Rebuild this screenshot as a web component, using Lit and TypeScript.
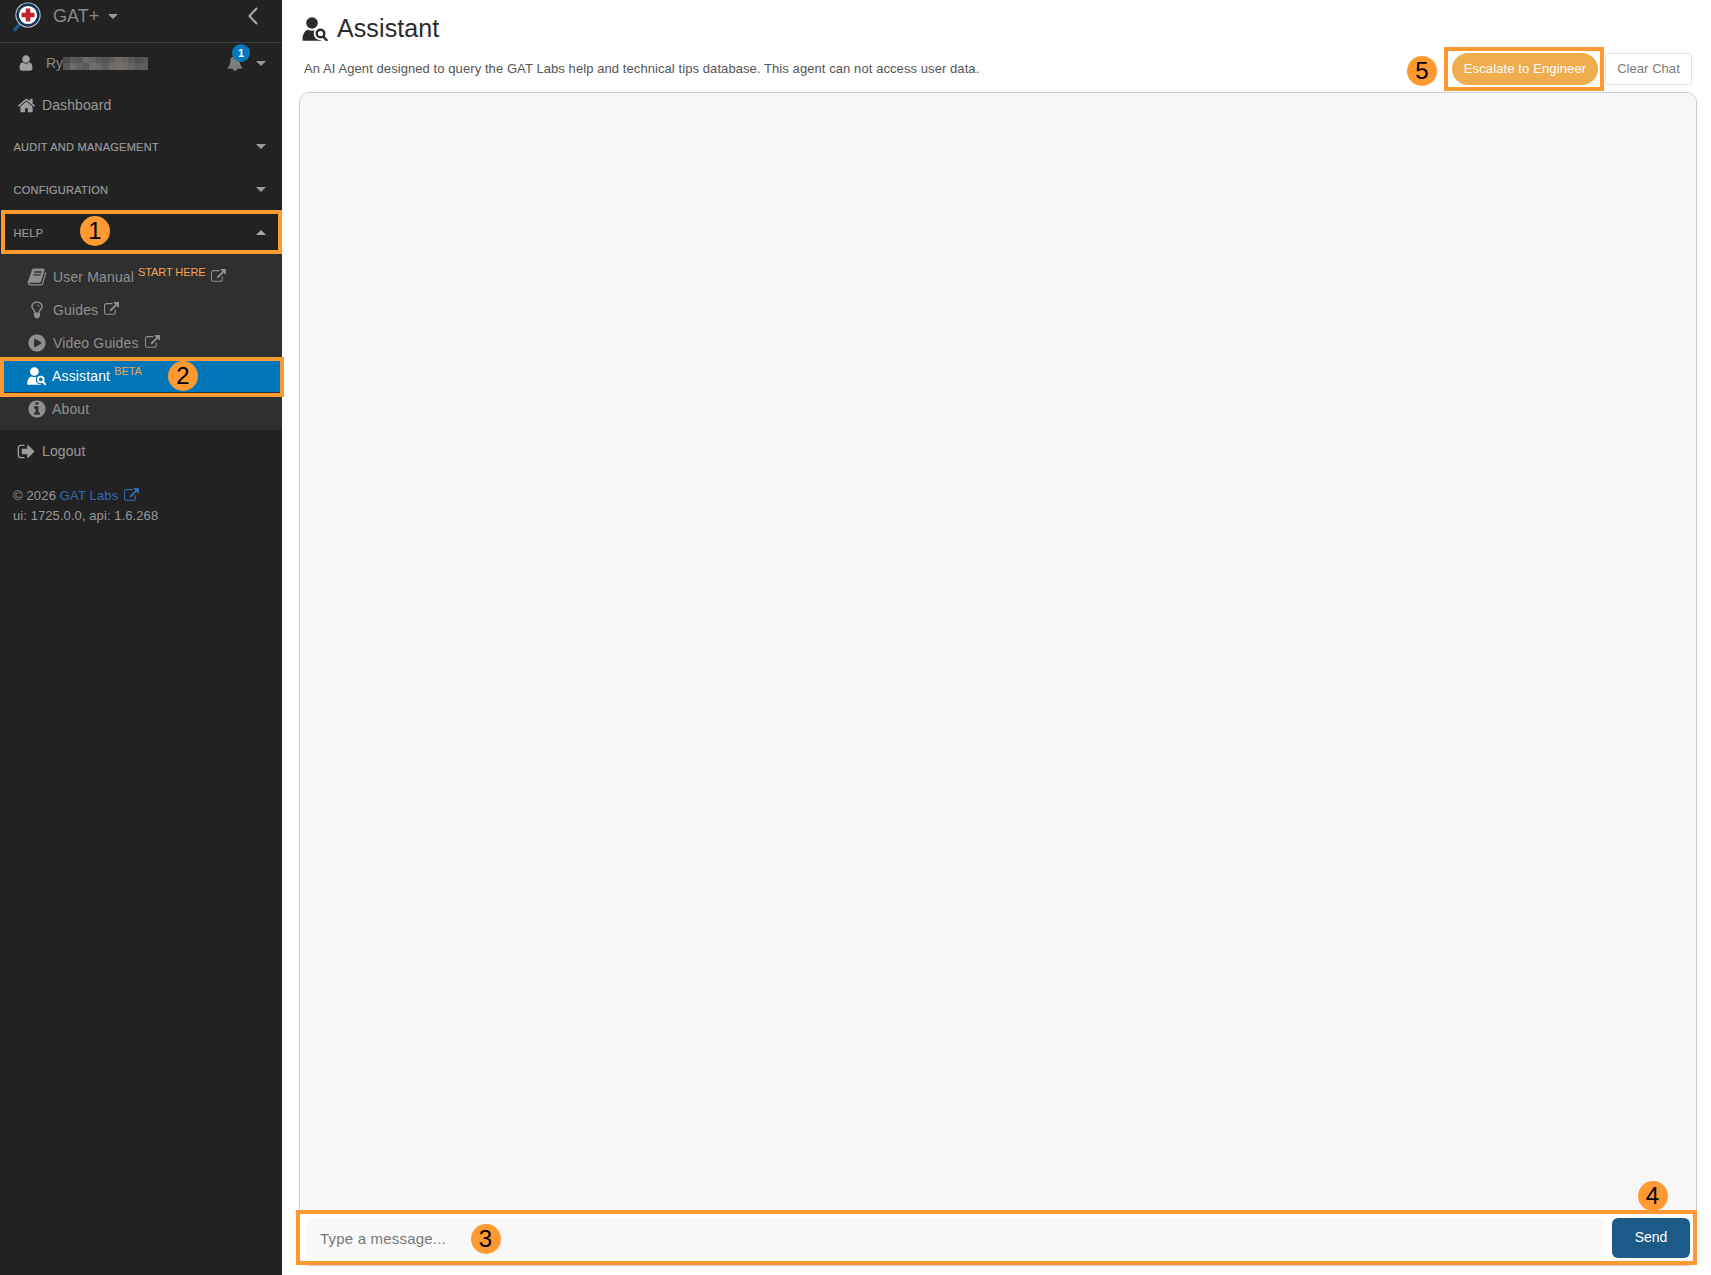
import { LitElement, css, html, svg } from 'lit';
import { customElement } from 'lit/decorators.js';

const FA = {
  user: 'M1536 1399q0 109-62.5 187t-150.5 78h-854q-88 0-150.5-78t-62.5-187q0-85 8.5-160.5t31.5-152 58.5-131 94-89 134.5-34.5q131 128 313 128t313-128q76 0 134.5 34.5t94 89 58.5 131 31.5 152 8.5 160.5zm-256-887q0 159-112.5 271.5t-271.5 112.5-271.5-112.5-112.5-271.5 112.5-271.5 271.5-112.5 271.5 112.5 112.5 271.5z',
  bell: 'M912 1696q0-16-16-16-59 0-101.5-42.5t-42.5-101.5q0-16-16-16t-16 16q0 73 51.5 124.5t124.5 51.5q16 0 16-16zm816-288q0 52-38 90t-90 38h-448q0 106-75 181t-181 75-181-75-75-181h-448q-52 0-90-38t-38-90q50-42 91-88t85-119.5 74.5-158.5 50-206 19.5-260q0-152 117-282.5t307-158.5q-8-19-8-39 0-40 28-68t68-28 68 28 28 68q0 20-8 39 190 28 307 158.5t117 282.5q0 139 19.5 260t50 206 74.5 158.5 85 119.5 91 88z',
  home: 'M1472 992v480q0 26-19 45t-45 19h-384v-384h-256v384h-384q-26 0-45-19t-19-45v-480q0-1 .5-3t.5-3l575-474 575 474q1 2 1 6zm223-69l-62 74q-8 9-21 11h-3q-13 0-21-7l-692-577-692 577q-12 8-24 7-13-2-21-11l-62-74q-8-10-7-23.5t11-21.5l719-599q32-26 76-26t76 26l244 204v-195q0-14 9-23t23-9h192q14 0 23 9t9 23v408l219 182q10 8 11 21.5t-7 23.5z',
  ext: 'M1408 928v320q0 119-84.5 203.5t-203.5 84.5h-832q-119 0-203.5-84.5t-84.5-203.5v-832q0-119 84.5-203.5t203.5-84.5h704q14 0 23 9t9 23v64q0 14-9 23t-23 9h-704q-66 0-113 47t-47 113v832q0 66 47 113t113 47h832q66 0 113-47t47-113v-320q0-14 9-23t23-9h64q14 0 23 9t9 23zm384-864v512q0 26-19 45t-45 19-45-19l-176-176-652 652q-10 10-23 10t-23-10l-114-114q-10-10-10-23t10-23l652-652-176-176q-19-19-19-45t19-45 45-19h512q26 0 45 19t19 45z',
  info: 'M1152 1376v-160q0-14-9-23t-23-9h-96v-512q0-14-9-23t-23-9h-320q-14 0-23 9t-9 23v160q0 14 9 23t23 9h96v320h-96q-14 0-23 9t-9 23v160q0 14 9 23t23 9h448q14 0 23-9t9-23zm-128-896v-160q0-14-9-23t-23-9h-192q-14 0-23 9t-9 23v160q0 14 9 23t23 9h192q14 0 23-9t9-23zm640 416q0 209-103 385.5t-279.5 279.5-385.5 103-385.5-103-279.5-279.5-103-385.5 103-385.5 279.5-279.5 385.5-103 385.5 103 279.5 279.5 103 385.5z',
  play: 'M896 128q209 0 385.5 103t279.5 279.5 103 385.5-103 385.5-279.5 279.5-385.5 103-385.5-103-279.5-279.5-103-385.5 103-385.5 279.5-279.5 385.5-103zm384 823q32-18 32-55t-32-55l-544-320q-31-19-64-1-32 19-32 56v640q0 37 32 56 16 8 32 8 17 0 32-9z',
  signout: 'M704 1440q0 4 1 20t.5 26.5-3 23.5-10 19.5-20.5 6.5h-320q-119 0-203.5-84.5t-84.5-203.5v-704q0-119 84.5-203.5t203.5-84.5h320q13 0 22.5 9.5t9.5 22.5q0 4 1 20t.5 26.5-3 23.5-10 19.5-20.5 6.5h-320q-66 0-113 47t-47 113v704q0 66 47 113t113 47h312l11.5 1 11.5 3 8 5.5 7 9 2 13.5zm928-544q0 26-19 45l-544 544q-19 19-45 19t-45-19-19-45v-288h-448q-26 0-45-19t-19-45v-384q0-26 19-45t45-19h448v-288q0-26 19-45t45-19 45 19l544 544q19 19 19 45z',
  book: 'M1703 478q40 57 18 129l-275 906q-19 64-76.5 107.5t-122.5 43.5h-923q-77 0-148.5-53.5t-99.5-131.5q-24-67-2-127 0-4 3-27t4-37q1-8-3-21.5t-3-19.5q2-11 8-21t16.5-23.5 16.5-23.5q23-38 45-91.5t30-91.5q3-10 .5-30t-.5-28q3-11 17-28t17-23q21-36 42-92t25-90q1-9-2.5-32t.5-28q4-13 22-30.5t22-22.5q19-26 42.5-84.5t27.5-96.5q1-8-3-25.5t-2-26.5q2-8 9-18t18-23 17-21q8-12 16.5-30.5t15-35 16-36 19.5-32 26.5-23.5 36-11.5 47.5 5.5l-1 3q38-9 51-9h761q74 0 114 56t18 130l-274 906q-36 119-71.5 153.5t-128.5 34.5h-869q-27 0-38 15-11 16-1 43 24 70 144 70h923q29 0 56-15.5t35-41.5l300-987q7-22 5-57 38 15 59 43zm-1064 2q-4 13 2 22.5t20 9.5h608q13 0 25.5-9.5t16.5-22.5l21-64q4-13-2-22.5t-20-9.5h-608q-13 0-25.5 9.5t-16.5 22.5zm-83 256q-4 13 2 22.5t20 9.5h608q13 0 25.5-9.5t16.5-22.5l21-64q4-13-2-22.5t-20-9.5h-608q-13 0-25.5 9.5t-16.5 22.5z',
  bulb: 'M1120 576q0 13-9.5 22.5t-22.5 9.5-22.5-9.5-9.5-22.5q0-46-54-71t-106-25q-13 0-22.5-9.5t-9.5-22.5 9.5-22.5 22.5-9.5q50 0 99.5 16t87 54 37.5 90zm160 0q0-72-34.5-134t-90-101.5-123-62-136.5-22.5-136.5 22.5-123 62-90 101.5-34.5 134q0 101 68 180 10 11 30.5 33t30.5 33q128 153 141 298h228q13-145 141-298 10-11 30.5-33t30.5-33q68-79 68-180zm128 0q0 155-103 268-45 49-74.5 87t-59.5 95.5-34 107.5q47 28 47 82 0 37-25 64 25 27 25 64 0 52-45 81 13 23 13 47 0 46-31.5 71t-77.5 25q-20 44-60 70t-87 26-87-26-60-70q-46 0-77.5-25t-31.5-71q0-24 13-47-45-29-45-81 0-37 25-64-25-27-25-64 0-54 47-82-4-50-34-107.5t-59.5-95.5-74.5-87q-103-113-103-268 0-99 44.5-184.5t117-142 164-89 186.5-32.5 186.5 32.5 164 89 117 142 44.5 184.5z',
};

const fa = (d: string, cls: string) => html`<svg class=${cls} viewBox="0 0 1792 1792" fill="currentColor"><path d=${d}></path></svg>`;

// person with a magnifier over the shoulder, --cut is the colour behind it
const agentIcon = (cls: string) => html`<svg class=${cls} viewBox="0 0 26 24" fill="currentColor">
  <circle cx="9.5" cy="6" r="5.8"></circle>
  <path d="M1 23.8c-.7 0-1-.4-1-1.200 0-5.400 2.500-9.600 6-9.800 1 .7 2.200 1 3.500 1s2.500-.3 3.500-1c3.500.2 6 4 6 9.800 0 .8-.3 1.200-1 1.200z"></path>
  <circle cx="18" cy="16.500" r="6.800" fill="var(--cut)"></circle>
  <circle cx="18" cy="16.500" r="3.800" fill="none" stroke="currentColor" stroke-width="2.400"></circle>
  <path d="M21 19.800l3 3.200" stroke="currentColor" stroke-width="2.500" stroke-linecap="round"></path>
</svg>`;

const logo = svg`
  <path d="M7.500 23.500L2 29.500" stroke="#1c5588" stroke-width="3.800" stroke-linecap="round"></path>
  <circle cx="15" cy="15" r="12.600" fill="#d9dee3"></circle>
  <circle cx="15" cy="15" r="10.400" fill="#fff" stroke="#17365a" stroke-width="2.600"></circle>
  <path d="M12.700 8.500h4.600v4.200h4.200v4.600h-4.200v4.200h-4.600v-4.200h-4.200v-4.600h4.200z" fill="#c8202c"></path>
`;

const blur = [
  ['#4a4a4a', '#5c5c5c', '#565656', '#6a6a6a', '#626262', '#5a5a5a', '#555', '#5f5f5f', '#6f6a66', '#676462', '#5a5a5a', '#4f4f4f', '#555'],
  ['#575757', '#6b6b6b', '#616161', '#595959', '#6e6e6e', '#686868', '#5d5d5d', '#6b6b6b', '#75706a', '#706c68', '#666', '#5b5b5b', '#5e5e5e'],
];

const subItems = [
  { icon: FA.book, label: 'User Manual', sup: 'START HERE', ext: true },
  { icon: FA.bulb, label: 'Guides', ext: true },
  { icon: FA.play, label: 'Video Guides', ext: true },
];

@customElement('app-root')
export class AppRoot extends LitElement {
  static styles = css`
    :host {
      display: flex;
      position: relative;
      width: 1711px;
      height: 1275px;
      overflow: hidden;
      background: #fff;
      font-family: 'Liberation Sans', Arial, sans-serif;
      color: #333;
    }

    .sidebar {
      width: 282px;
      flex: none;
      background: #222;
      color: #999;
      font-size: 14px;
      display: flex;
      flex-direction: column;
    }

    .brand {
      flex: none;
      display: flex;
      align-items: center;
      border-bottom: 1px solid #3c3c3c;
      padding: 0 24px 10px 13px;
      height: 32px;
    }
    .logo { width: 30px; height: 32px; flex: none; }
    .brand-name { font-size: 18px; color: #8a8a8a; margin-left: 10px; }
    .brand .caret { margin-left: 9px; }
    .chev { width: 10px; height: 18px; margin-left: auto; }

    .caret {
      width: 0;
      height: 0;
      flex: none;
      border-left: 5px solid transparent;
      border-right: 5px solid transparent;
      border-top: 5px solid #9a9a9a;
    }
    .caret.up { border-top: 0; border-bottom: 5px solid #a8a8a8; }

    .user {
      height: 40px;
      flex: none;
      display: flex;
      align-items: center;
      padding: 0 16px 0 17px;
    }
    .user .ic { width: 18px; height: 18px; color: #a0a0a0; }
    .user-name { margin-left: 11px; color: #888; }
    .pixels { display: flex; flex-direction: column; }
    .pixels div { display: flex; }
    .pixels span { width: 6.500px; height: 6.500px; }
    .bell-wrap { position: relative; margin-left: auto; margin-right: 13px; height: 16px; }
    .bell { width: 16px; height: 16px; color: #7d7d7d; display: block; }
    .badge {
      position: absolute;
      left: 5px;
      top: -11px;
      width: 18px;
      height: 18px;
      border-radius: 50%;
      background: #0678bd;
      color: #fff;
      font-size: 11px;
      font-weight: 700;
      display: flex;
      align-items: center;
      justify-content: center;
    }

    .link {
      height: 42px;
      flex: none;
      display: flex;
      align-items: center;
      padding-left: 17px;
      color: #999;
      letter-spacing: 0.1px;
    }
    .link.dash { padding-top: 2px; box-sizing: border-box; }
    .link .ic { width: 19px; height: 19px; margin-right: 6px; color: #9c9c9c; flex: none; }

    .section {
      height: 43px;
      flex: none;
      display: flex;
      align-items: center;
      justify-content: space-between;
      padding: 0 16px 0 13.500px;
      font-size: 11px;
      color: #9a9a9a;
      letter-spacing: 0.25px;
      -webkit-text-stroke: 0.2px #9a9a9a;
    }

    .sub {
      background: #2f2f2f;
      padding: 6px 0 5px;
      flex: none;
    }
    .sub-row {
      height: 33px;
      display: flex;
      align-items: center;
      padding-left: 27px;
      color: #8f8f8f;
      letter-spacing: 0.15px;
    }
    .sub-row .ic { width: 20px; height: 20px; margin-right: 6px; color: #8f8f8f; flex: none; }
    .sub-row .agent { --cut: #0075b8; width: 20px; height: 18px; margin: 0 5px 0 0; color: #fff; }
    .sub-row.active { background: #0075b8; color: #fff; }
    .sub-row.about .ic { margin-right: 5px; }
    sup {
      font-size: 11px;
      line-height: 1;
      color: #f5a64e;
      align-self: flex-start;
      margin: 7px 0 0 4px;
      letter-spacing: -0.1px;
    }
    .ext { width: 15px; height: 15px; margin-left: 6px; color: #8f8f8f; flex: none; }

    .footer {
      padding: 14px 0 0 13px;
      font-size: 13px;
      line-height: 20px;
      color: #999;
      letter-spacing: 0.15px;
    }
    .footer a { color: #2f6db3; text-decoration: none; }
    .footer .ext { color: #2f6db3; vertical-align: -3px; margin-left: 6px; }
    .footer .version { letter-spacing: 0.08px; }

    .main {
      flex: 1;
      min-width: 0;
      display: flex;
      flex-direction: column;
      padding: 0 14px 9px 17px;
    }

    .title {
      height: 53px;
      flex: none;
      display: flex;
      align-items: center;
      padding: 4px 0 0 3px;
      box-sizing: border-box;
      font-size: 25px;
      letter-spacing: 0.1px;
      color: #2b2b2b;
    }
    .title .agent { --cut: #fff; width: 27px; height: 24px; margin-right: 8px; color: #2b2b2b; }

    .intro {
      height: 32px;
      flex: none;
      margin-bottom: 7px;
      padding: 0 5px 0 5px;
      display: flex;
      align-items: center;
      gap: 7px;
      font-size: 13px;
      color: #555;
    }
    .intro p { margin: 0 auto 2px 0; letter-spacing: 0.08px; }
    button {
      font-family: inherit;
      font-size: 13px;
      height: 32px;
      padding: 0 0 2px;
      cursor: pointer;
      flex: none;
    }
    .escalate {
      width: 146px;
      border: 0;
      border-radius: 16px;
      background: #f0ad4e;
      color: #fff;
      letter-spacing: 0.12px;
    }
    .clear {
      width: 87px;
      border: 1px solid #e2e2e2;
      border-radius: 3px;
      background: #fff;
      color: #7c7c7c;
      letter-spacing: 0.05px;
    }

    .panel {
      flex: 1;
      min-height: 0;
      display: flex;
      flex-direction: column;
      border: 1px solid #ccc;
      border-radius: 10px;
      overflow: hidden;
    }
    .messages { flex: 1; background: #f7f7f7; }
    .composer {
      height: 40px;
      flex: none;
      padding: 6px 6px 7px 6px;
      display: flex;
      gap: 8px;
      background: #fff;
    }
    .composer input {
      flex: 1;
      min-width: 0;
      border: 0;
      outline: 0;
      border-radius: 8px;
      background: #f9f9f9;
      padding: 0 14px;
      font-family: inherit;
      font-size: 15px;
      letter-spacing: 0.2px;
    }
    .composer input::placeholder { color: #777; opacity: 1; }
    .send {
      width: 78px;
      height: 40px;
      border: 0;
      border-radius: 6px;
      background: #1c5a87;
      color: #fff;
      font-size: 14px;
    }

    .overlay { position: absolute; inset: 0; pointer-events: none; }
    .box { position: absolute; border: 4px solid #ff9a33; box-sizing: border-box; }
    .box-help { left: 1px; top: 210px; width: 281px; height: 44px; }
    .box-assistant { left: 0; top: 357px; width: 284px; height: 40px; }
    .box-escalate { left: 1444px; top: 47px; width: 160px; height: 44px; }
    .box-composer { left: 296px; top: 1210px; width: 1401px; height: 55px; }
    .num {
      position: absolute;
      width: 30px;
      height: 30px;
      border-radius: 50%;
      background: #ff9a33;
      color: #000;
      font-size: 24px;
      line-height: 30px;
      text-align: center;
    }
    .n1 { left: 80px; top: 216px; }
    .n2 { left: 168px; top: 361px; }
    .n3 { left: 470.500px; top: 1224px; }
    .n4 { left: 1637.500px; top: 1181px; }
    .n5 { left: 1407px; top: 56px; }
  `;

  renderOverlay() {
    return html`<div class="overlay">
      <div class="box box-help"></div>
      <div class="box box-assistant"></div>
      <div class="box box-escalate"></div>
      <div class="box box-composer"></div>
      <div class="num n1">1</div>
      <div class="num n2">2</div>
      <div class="num n3">3</div>
      <div class="num n4">4</div>
      <div class="num n5">5</div>
    </div>`;
  }

  render() {
    return html`
      <aside class="sidebar">
        <div class="brand">
          <svg class="logo" viewBox="0 0 30 32" fill="none">${logo}</svg>
          <span class="brand-name">GAT+</span>
          <span class="caret"></span>
          <svg class="chev" viewBox="0 0 10 18" fill="none" stroke="#aaa" stroke-width="2"><path d="M9 1L1.500 9 9 17"></path></svg>
        </div>
        <div class="user">
          ${fa(FA.user, 'ic')}
          <span class="user-name">Ry</span>
          <div class="pixels">
            ${blur.map((row) => html`<div>${row.map((c) => html`<span style="background:${c}"></span>`)}</div>`)}
          </div>
          <div class="bell-wrap">
            ${fa(FA.bell, 'bell')}
            <span class="badge">1</span>
          </div>
          <span class="caret"></span>
        </div>
        <div class="link dash">${fa(FA.home, 'ic')}Dashboard</div>
        <div class="section">AUDIT AND MANAGEMENT<span class="caret"></span></div>
        <div class="section">CONFIGURATION<span class="caret"></span></div>
        <div class="section">HELP<span class="caret up"></span></div>
        <div class="sub">
          ${subItems.map(
            (it) => html`<div class="sub-row">
              ${fa(it.icon, 'ic')}${it.label}${it.sup ? html`<sup>${it.sup}</sup>` : ''}${fa(FA.ext, 'ext')}
            </div>`
          )}
          <div class="sub-row active">${agentIcon('agent')}Assistant<sup>BETA</sup></div>
          <div class="sub-row about">${fa(FA.info, 'ic')}About</div>
        </div>
        <div class="link">${fa(FA.signout, 'ic')}Logout</div>
        <div class="footer">
          <div>© 2026 <a>GAT Labs</a>${fa(FA.ext, 'ext')}</div>
          <div class="version">ui: 1725.0.0, api: 1.6.268</div>
        </div>
      </aside>
      <main class="main">
        <div class="title">${agentIcon('agent')}Assistant</div>
        <div class="intro">
          <p>An AI Agent designed to query the GAT Labs help and technical tips database. This agent can not access user data.</p>
          <button class="escalate">Escalate to Engineer</button>
          <button class="clear">Clear Chat</button>
        </div>
        <section class="panel">
          <div class="messages"></div>
          <div class="composer">
            <input placeholder="Type a message..." />
            <button class="send">Send</button>
          </div>
        </section>
      </main>
      ${this.renderOverlay()}
    `;
  }
}
